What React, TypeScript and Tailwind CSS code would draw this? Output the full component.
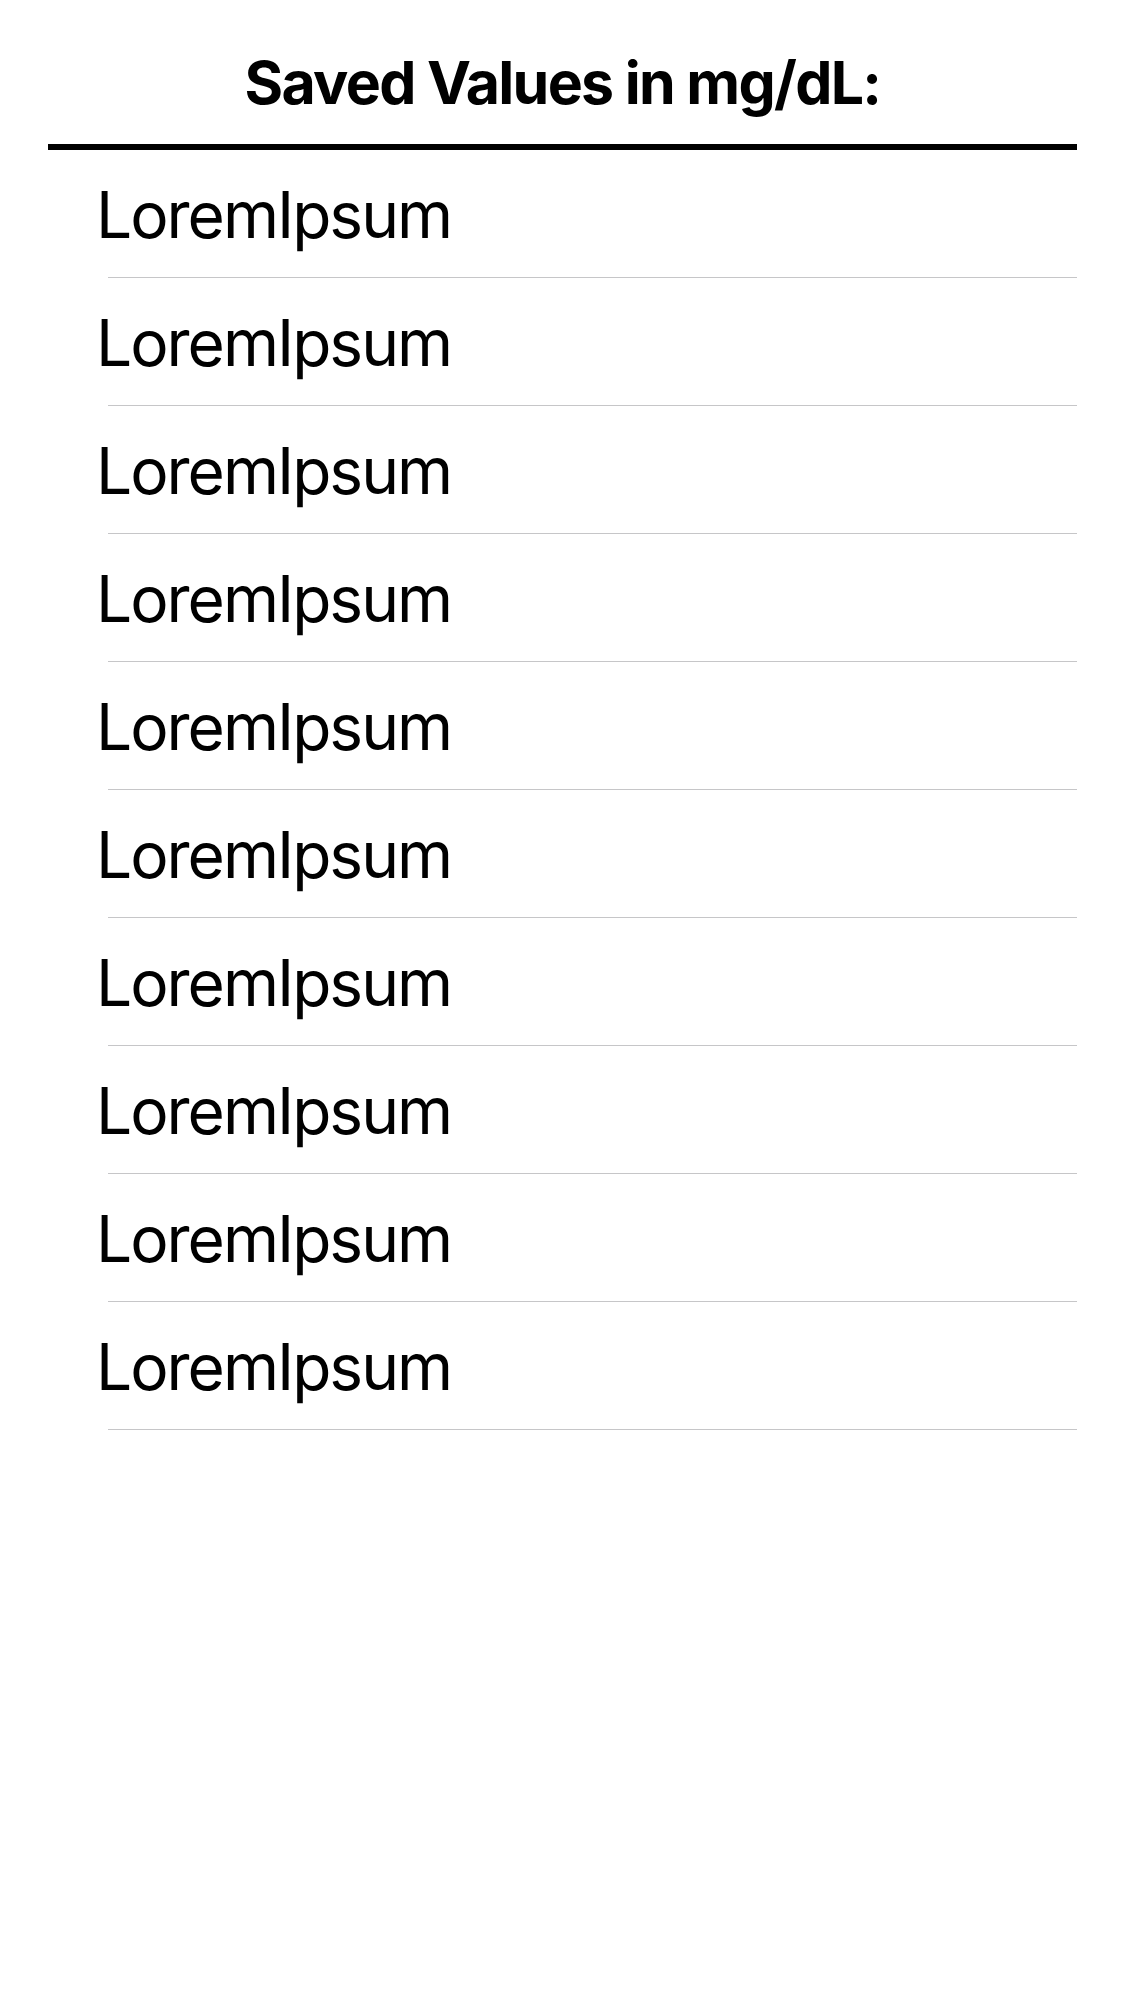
import React from "react";

export default function App() {
  const rows = Array.from({ length: 10 }, (_, i) => i);
  return (
    <div
      className="w-[1125px] h-[2001px] bg-white text-black"
      style={{ fontFamily: "Inter, 'Liberation Sans', sans-serif" }}
    >
      <div className="h-[144px] flex items-start justify-center pt-[44px]">
        <h1 className="text-[59px] font-bold leading-[78px] tracking-[-1.7px]">
          Saved Values in mg/dL:
        </h1>
      </div>
      <div className="mx-12 h-[6px] bg-black" />
      <ul>
        {rows.map((i) => (
          <li key={i} className="flex flex-col">
            <div className="h-[127px] flex items-center pl-[96px] pt-[3px]">
              <span className="text-[64px] leading-none tracking-[-2px]">LoremIpsum</span>
            </div>
            <div className="ml-[108px] mr-12 h-px bg-[#c6c6c8]" />
          </li>
        ))}
      </ul>
    </div>
  );
}
